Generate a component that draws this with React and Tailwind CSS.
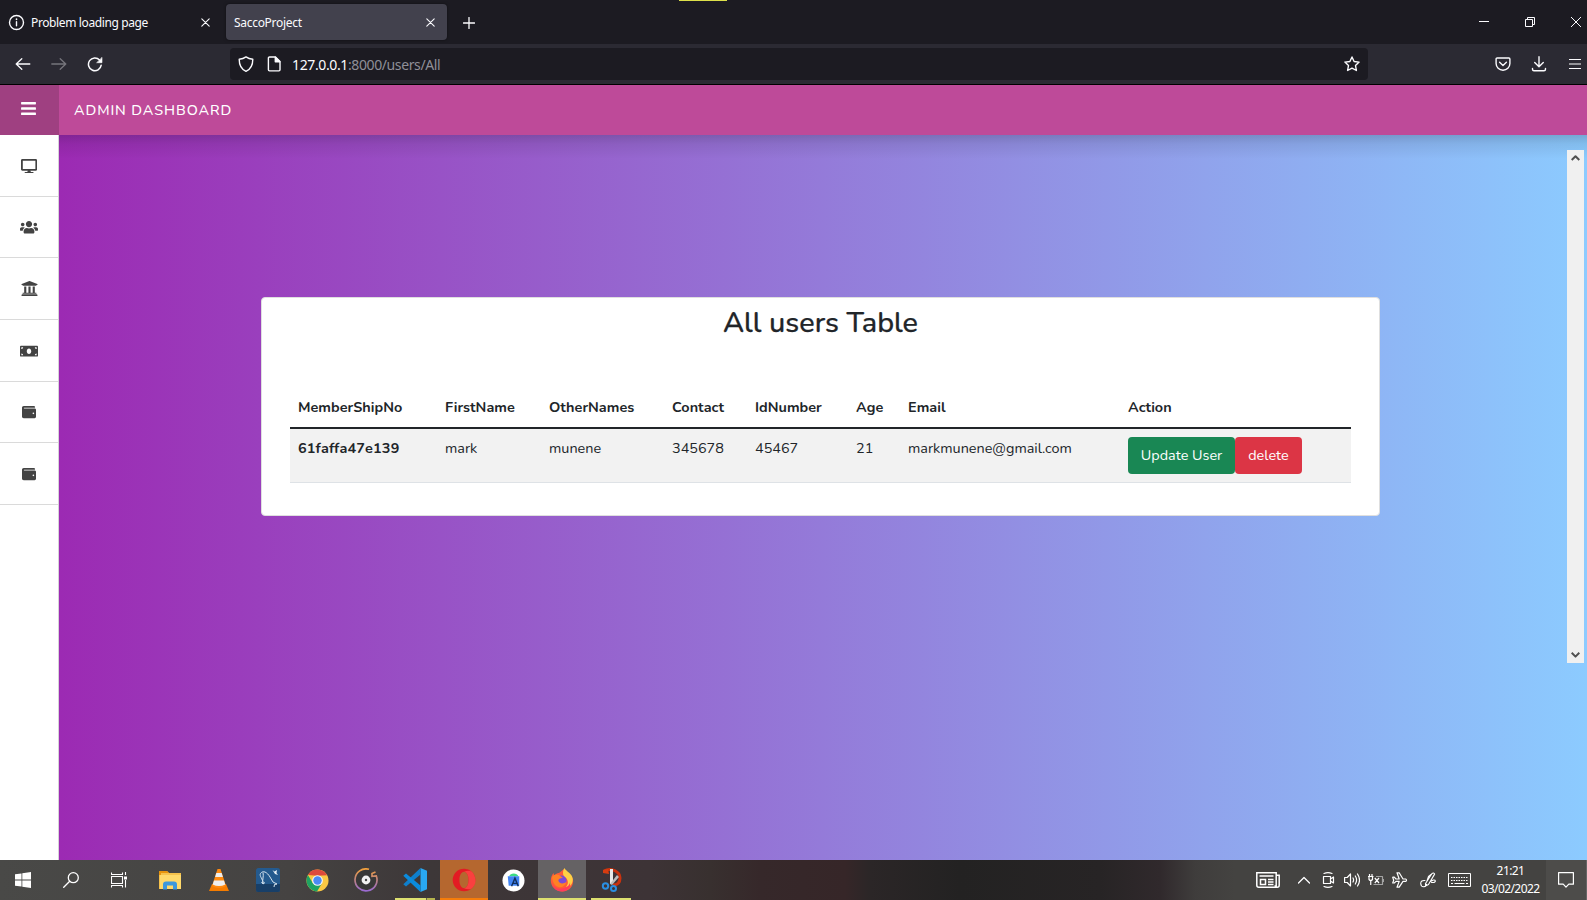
import React from "react";
import { FaBars, FaDesktop, FaUsers, FaUniversity, FaMoneyBill, FaWallet } from "react-icons/fa";

function Line({ size = 16, w = 1.3, className = "", children, box = 16, cap = "round" }) {
  return (
    <svg width={size} height={size} viewBox={`0 0 ${box} ${box}`} fill="none" stroke="currentColor"
      strokeWidth={w} strokeLinecap={cap} strokeLinejoin="round" className={`shrink-0 ${className}`}>
      {children}
    </svg>
  );
}

const Cross = ({ size = 9, w = 1.1 }) => (
  <Line size={size} box={9} w={w}><path d="M.8.8l7.4 7.4M8.2.8L.8 8.2" /></Line>
);

function TabBar() {
  return (
    <div className="flex h-11 items-center bg-[#1c1b22] text-[12px] text-[#fbfbfe]">
      <div className="flex w-[226px] items-center pl-2">
        <Line size={17} box={17} w={1.4}>
          <circle cx="8.5" cy="8.5" r="7" /><path d="M8.5 7.8v4" /><path d="M8.5 5v.4" strokeWidth="1.6" />
        </Line>
        <span className="ml-1.5 w-[170px] pt-[2px] tracking-[-0.38px]">Problem loading page</span>
        <Cross />
      </div>
      <div className="flex h-9 w-[221px] items-center rounded bg-[#42414d] pl-2 shadow-[0_0_3px_rgba(0,0,0,0.5)]">
        <span className="w-[192px] pt-[2px] tracking-[-0.3px]">SaccoProject</span>
        <Cross />
      </div>
      <Line size={12} box={12} w={1.3} className="ml-4 mt-px"><path d="M6 .5v11M.5 6h11" /></Line>
      <div className="ml-auto flex items-center pr-[6px]">
        <Line size={10} box={10} w={1} cap="butt"><path d="M0 4.5h10" /></Line>
        <Line size={10} box={10} w={1} cap="butt" className="ml-9"><path d="M.5 2.5h7v7h-7zM2.5 2.5v-2h7v7h-2" /></Line>
        <Line size={10} box={10} w={1} className="ml-9"><path d="M.3.3l9.4 9.4M9.7.3L.3 9.7" /></Line>
      </div>
    </div>
  );
}

function Toolbar() {
  return (
    <div className="flex h-[41px] items-center border-b border-black bg-[#2b2a33] text-[#fbfbfe]">
      <div className="flex w-[230px] items-center pl-[15px]">
        <Line w={1.3}><path d="M1.2 8h13.600M6.800 2.700L1.200 8l5.600 5.300" /></Line>
        <Line w={1.3} className="ml-5 text-[#76757c]"><path d="M.8 8h14M9.200 2.700L14.800 8l-5.600 5.300" /></Line>
        <Line w={1.5} className="ml-5"><path d="M14.200 9.200A6.400 6.400 0 1 1 12.600 4" /><path d="M15 1.700v5h-5z" fill="currentColor" strokeWidth=".6" /></Line>
      </div>
      <div className="flex h-8 w-[1138px] items-center rounded bg-[#1c1b22] pl-2 pr-2">
        <Line w={1.4}><path d="M8 .9c2.200 1.600 4.300 2.200 6.800 2.400 0 5.700-1.700 9.900-6.800 12-5.100-2.100-6.800-6.300-6.800-12C3.700 3.100 5.800 2.500 8 .9z" /></Line>
        <Line w={1.4} className="ml-3"><path d="M3.500 1h6l4.500 4.500v8.300a1.100 1.100 0 0 1-1.100 1.100H3.500a1.100 1.100 0 0 1-1.100-1.100V2.100A1.100 1.100 0 0 1 3.500 1z" /><path d="M9.300 1.300v4.500h4.500z" fill="currentColor" /></Line>
        <span className="ml-[10px] pt-px text-[14px] tracking-[-0.38px] text-[#8f8f98]"><span className="text-[#fbfbfe]">127.0.0.1</span>:8000/users/All</span>
        <Line w={1.4} className="ml-auto"><path d="M8 1l2.100 4.500 5 .6-3.600 3.400.9 5L8 12.100l-4.400 2.400.9-5L.9 6.100l5-.6z" /></Line>
      </div>
      <div className="ml-auto flex items-center pr-[6px]">
        <Line w={1.400}><path d="M2.100 2h11.800a1 1 0 0 1 1 1v4.600a6.900 6.600 0 0 1-13.800 0V3a1 1 0 0 1 1-1z" /><path d="M4.600 6.300L8 9.500l3.400-3.200" /></Line>
        <Line w={1.400} className="mb-px ml-5"><path d="M8 .8v9.800M3.700 6.500L8 10.700l4.300-4.200M1.500 12.500v.8A1.500 1.500 0 0 0 3 14.800h10a1.500 1.500 0 0 0 1.500-1.500v-.8" /></Line>
        <Line size={12} box={12} w={1.2} cap="butt" className="ml-[22px]"><path d="M0 1.500h12M0 6h12M0 10.500h12" /></Line>
      </div>
    </div>
  );
}

const sideItems = [
  { Icon: FaDesktop, cls: "h-[14.4px] w-[16.2px] mt-px", row: "h-[62px]" },
  { Icon: FaUsers, cls: "h-[14.4px] w-[18px]", row: "h-[61px]" },
  { Icon: FaUniversity, cls: "h-[17px] w-[17px] mb-px", row: "h-[62px]" },
  { Icon: FaMoneyBill, cls: "h-[14.4px] w-[18px] mt-px", row: "h-[62px]" },
  { Icon: FaWallet, cls: "h-[14px] w-[14px]", row: "h-[61px]" },
  { Icon: FaWallet, cls: "h-[14px] w-[14px]", row: "h-[62px]" },
];

function Sidebar() {
  return (
    <aside className="w-[59px] shrink-0 border-r border-[#d6d2d8] bg-white text-[#434343]">
      {sideItems.map(({ Icon, cls, row }, i) => (
        <div key={i} className={`flex items-center justify-center border-b border-[#dadada] ${row}`}>
          <Icon className={cls} />
        </div>
      ))}
    </aside>
  );
}

const columns = [
  ["MemberShipNo", "61faffa47e139", "w-[147px]"],
  ["FirstName", "mark", "w-[104px]"],
  ["OtherNames", "munene", "w-[123px]"],
  ["Contact", "345678", "w-[83px]"],
  ["IdNumber", "45467", "w-[101px]"],
  ["Age", "21", "w-[52px]"],
  ["Email", "markmunene@gmail.com", "w-[220px]"],
];

function UsersCard() {
  return (
    <section className="ml-[202px] mt-[162px] h-[219px] w-[1119px] rounded border border-[#dfdfdf] bg-white px-7 pt-[7px] text-[14.4px] text-[#212529]">
      <h2 className="text-center text-[28.8px] font-medium leading-[36px] tracking-[0.02px] [-webkit-text-stroke:0.25px_currentColor]">All users Table</h2>
      <table className="mt-[46px] w-[1061px] table-fixed border-collapse">
        <thead>
          <tr className="h-[41px] border-b-2 border-[#212529] text-left align-top">
            {columns.map(([h, , w]) => <th key={h} className={`px-2 pt-[9px] font-bold leading-[22px] tracking-[0.04px] ${w}`}>{h}</th>)}
            <th className="px-2 pt-[9px] font-bold leading-[22px]">Action</th>
          </tr>
        </thead>
        <tbody>
          <tr className="h-[54px] border-b border-[#dee2e6] bg-[#f2f2f2] align-top">
            {columns.map(([h, v], i) => (
              <td key={h} className={`px-2 pt-2 leading-[22px] ${i === 0 ? "font-bold tracking-[0.17px]" : ""}`}>{v}</td>
            ))}
            <td className="px-2 pt-2">
              <div className="flex text-white">
                <button className="h-[37px] w-[107px] rounded bg-[#198754]">Update User</button>
                <button className="h-[37px] w-[67px] rounded bg-[#dc3545]">delete</button>
              </div>
            </td>
          </tr>
        </tbody>
      </table>
    </section>
  );
}

function Scrollbar() {
  return (
    <div className="ml-auto mr-[3px] mt-[15px] flex h-[513px] w-[17px] flex-col items-center justify-between bg-[#f0f0f0] py-1 text-[#505050]">
      <Line size={9} box={9} w={2} cap="butt"><path d="M.7 6L4.500 2.200l3.800 3.800" /></Line>
      <Line size={9} box={9} w={2} cap="butt"><path d="M.7 2.800l3.800 3.800 3.800-3.800" /></Line>
    </div>
  );
}

const Art = ({ s = 24, children }) => <svg width={s} height={s} viewBox="0 0 24 24">{children}</svg>;

const Folder = () => (
  <Art><path d="M1 3h8l2 2h12v16H1z" fill="#f5c14c" /><path d="M1 3h8l2 2H3v2H1z" fill="#e8940c" /><path d="M2 7h21v14H2z" fill="#ffd96b" /><path d="M5 21.500v-5q0-3 3-3h8q3 0 3 3v5h-4v-4H9v4z" fill="#3d98dd" /></Art>
);
const Vlc = () => (
  <Art><path d="M5 16h14l3 7H2z" fill="#f57c00" /><path d="M10.500 1h3l5.500 17q-7 4-14 0z" fill="#ff8a10" /><path d="M9.300 5h5.400l1.200 4H8.100zM7 12.500h10l1.300 4q-6.300 3-12.600 0z" fill="#eee" /></Art>
);
const Mysql = () => (
  <Art><rect width="24" height="24" rx="2.500" fill="#245a8e" /><path d="M0 16h24v6q0 2-2 2H2q-2 0-2-2z" fill="#183f68" /><path d="M7 15C7 11 3 8 4.500 5.500 7 2 11 4 14 9l3 5 4 2-2.500.5-.5 2.500M7 4.500c1 4-1 7 0 11M5.500 14l1.500 2 2-1.500" stroke="#d5e3ee" strokeWidth="1" fill="none" /><path d="M16.500 2l2 1.500L21 2l-.5 3L22 7l-3-1z" fill="#e6eef4" /></Art>
);
const Chrome = () => (
  <Art s={23}><circle cx="12" cy="12" r="11.500" fill="#fbc843" /><path d="M2.040 6.250A11.500 11.500 0 0 1 22 6.500L12 7z" fill="#de4a3c" /><path d="M2.040 6.250A11.500 11.500 0 0 0 11.500 23.500L16.500 15 7 14.500z" fill="#1ea362" /><circle cx="12" cy="12" r="5.600" fill="#f7f7f7" /><circle cx="12" cy="12" r="4.400" fill="#4a8af4" /></Art>
);
const Groove = () => (
  <Art><defs><linearGradient id="gr" x2="0" y2="1"><stop stopColor="#f4a13c" /><stop offset=".55" stopColor="#b77f88" /><stop offset="1" stopColor="#9b6bd3" /></linearGradient></defs><circle cx="12" cy="12" r="10" fill="#383838" /><path d="M15 1.300A11 11 0 1 0 22.300 8L18 8.300V5.500l3.500-1.500" stroke="url(#gr)" strokeWidth="1.700" fill="none" /><circle cx="12" cy="12" r="4.400" fill="#f2f2f2" /><circle cx="12" cy="12" r="1.200" fill="#444" /></Art>
);
const Code = () => (
  <Art><path d="M17.500 0L24 2.800v18.400L17.500 24z" fill="#29a8f2" /><path d="M17.500 0v6.500L3 18.500.3 16.200z" fill="#0f7fcc" /><path d="M17.500 24v-6.500L3 5.500.3 7.800z" fill="#0b8bdd" /></Art>
);
const Opera = () => (
  <Art><path fillRule="evenodd" d="M12 .7a11.300 11.300 0 1 0 0 22.600A11.300 11.300 0 0 0 12 .7zm0 3.100c2.800 0 4.600 3.700 4.600 8.200s-1.800 8.200-4.600 8.200S7.400 16.500 7.400 12 9.200 3.800 12 3.800z" fill="#e31b23" /><path d="M12 .7a11.300 11.300 0 0 1 7.600 19.700c-2 1.300-5 1.300-7.600-.2 2.800 0 4.600-3.700 4.600-8.200S14.800 3.800 12 3.800c2.600-1.500 5.600-1.500 7.600-.2C17.600 1.700 15 .7 12 .7z" fill="#f9403f" /></Art>
);
const Studio = () => (
  <Art s={23}><circle cx="12" cy="12" r="11.500" fill="#fff" /><path d="M7.500 7.500a5 4 0 0 1 9.500 0z" fill="#3ddc84" /><path d="M6 7.500h12v10H7z" fill="#4285f4" /><path d="M10 18l3.500-8.500L17 18m-5.700-3h4.400" stroke="#12305e" strokeWidth="1.500" fill="none" /></Art>
);
const Firefox = () => (
  <Art><path d="M14 1c1 3 6 4 8.500 9 2.300 6-2 13.500-10 13.500C5 23.500.8 18 .8 12.500.8 9 2 7 3.500 5l.7 2.300C6 5.500 8 5 9 5z" fill="#ff5a38" /><path d="M14.500 0c2 4 7.500 5 8.300 11 .2 5-2.800 8-6.800 8 3-3 2-7 0-9-2-1-3-3-3-5 0-2 .5-3.500 1.500-5z" fill="#ffd045" /><circle cx="11.500" cy="12.500" r="5" fill="#7a4bd6" /><path d="M2 9c2-3 5-3 7-2l4 3c-3 0-5 1-4.500 3 1 3 5 3 8 1-1 4-5 6-8 5-4-1-6-5-6.500-10z" fill="#ff8124" /><path d="M2 15c2 5 7 7 12 5 4-1 6-4 6-6 1 6-3 9.500-8 9.500S3 20 2 15z" fill="#ff3c5d" /></Art>
);
const Snip = () => (
  <Art><path d="M5 3C13-1 21 4 21 10c0 5-3 7-7 7" fill="none" stroke="#c9320e" strokeWidth="3" /><path d="M4 2l5-1 1 5-6-1z" fill="#d63c10" /><path d="M11 1h3v15h-3z" fill="#e9e9e9" /><path d="M18 7l2 2-7 8-2-1z" fill="#bdbdbd" /><circle cx="6.500" cy="18" r="2.700" fill="none" stroke="#2a8ee0" strokeWidth="2" /><circle cx="14.500" cy="20.500" r="2.500" fill="none" stroke="#2a8ee0" strokeWidth="2" /></Art>
);

const apps = [
  { Icon: Folder }, { Icon: Vlc }, { Icon: Mysql }, { Icon: Chrome }, { Icon: Groove },
  { Icon: Code, bar: "w-10 bg-[linear-gradient(to_right,#dde070_31px,#6b6744_31px,#6b6744_32px,#b5b44d_32px)]" },
  { Icon: Opera, tile: "bg-[#b5672f]", bar: "w-12 bg-[#f57c0a]" },
  { Icon: Studio },
  { Icon: Firefox, tile: "bg-[#656264]", bar: "w-12 bg-[#dde070]" },
  { Icon: Snip, bar: "w-10 bg-[#dde070]" },
];

function Taskbar() {
  return (
    <footer className="flex h-10 items-stretch bg-[linear-gradient(to_right,#494947_0,#454342_290px,#3d3738_430px,#3d3336_650px,#38302f_710px,#36282a_760px,#362628_845px,#2b2627_870px,#232222_960px,#272425_1100px,#30292c_1160px,#3f3d3c_1195px,#444341_1235px,#444341_100%)] text-white">
      <div className="flex w-[46px] items-center justify-center">
        <svg width="16" height="16" viewBox="0 0 16 16" fill="currentColor"><path d="M0 2.300l6.500-.9v6.200H0zM7.300 1.300L16 0v7.600H7.300zM0 8.400h6.500v6.200L0 13.700zM7.300 8.400H16V16l-8.700-1.300z" /></svg>
      </div>
      <div className="ml-px flex w-12 items-center justify-center"><Line w={1.300}><circle cx="10.300" cy="5.700" r="5" /><path d="M6.700 9.300L.7 15.300" /></Line></div>
      <div className="mr-[3px] flex w-12 items-center justify-center">
        <Line w={1.100} cap="butt"><path d="M.5.500v2h11v-2M.5 15.500v-2h11v2M.5 4.500h11v7H.5zM14.500 0v3M14.500 8v7.500" /><path d="M13 4.500h3v3h-3z" fill="currentColor" stroke="none" /></Line>
      </div>
      <div className="flex gap-px">
        {apps.map(({ Icon, tile = "", bar }, i) => (
          <div key={i} className={`flex w-12 flex-col items-center ${tile}`}>
            <div className="flex h-[38px] items-center pt-[2px]"><Icon /></div>
            {bar && <div className={`h-[2px] ${bar}`} />}
          </div>
        ))}
      </div>
      <div className="ml-auto flex items-center">
        <div className="mr-1 flex w-10 justify-center">
          <svg width="24" height="16" viewBox="0 0 24 16" fill="none" stroke="currentColor" strokeWidth="1.500"><path d="M.8.8h19.400v14.400H2.800a2 2 0 0 1-2-2zM20.200 3.200h3v10a2 2 0 0 1-4 0M3.500 4h14M12 7.500h5.500M12 10h5.500M12 12.500h5.500M4.500 7.500h5v5h-5z" /></svg>
        </div>
        <div className="flex w-6 justify-center"><Line size={12} box={12} w={1.300}><path d="M.5 9L6 3.500 11.500 9" /></Line></div>
        <div className="flex w-6 justify-center"><Line w={1.200}><path d="M3.500 4.500h7v7h-7zM10.500 7l3-2v6l-3-2M4 1.500Q8-.2 12 1.500M4 14.500q4 1.700 8 0" /></Line></div>
        <div className="flex w-6 justify-center"><Line w={1.200}><path d="M.6 5.500h2.600L6.500 2v12l-3.300-3.500H.6zM9 6q1.200 2 0 4M11.300 4q2.600 4 0 8M13.500 2q4 6 0 12" /></Line></div>
        <div className="flex w-6 justify-center"><Line w={1.200} cap="butt"><path d="M8 4.500h6.500v8H5.500M15.500 7v3" stroke="#a3a3a3" /><path d="M0 4.500h5.500M1 4.500v3q1.750 2 3.500 0v-3M1.500 2v2.500M4 2v2.500M2.750 8.500V13M6.800 6l4.200 5M11 6l-4.200 5" /></Line></div>
        <div className="flex w-6 justify-center"><Line w={1.200}><path d="M.7 5.200h1.600L4 7h3.200L5 .8h2.200L11 7h2.700a1.300 1.300 0 0 1 0 2.400H11L7.200 15.200H5L7.200 9.400H4L2.300 11H.7l1-2.800z" /></Line></div>
        <div className="flex w-8 justify-center"><Line w={1.100}><path d="M5.500 11.500L12 1.500q1.700-1.200 2.600.6L8.500 12.500l-3 1.500zM5 8.500Q.8 8 .7 11.500q.3 3.300 2.800 3.300 2.500-.3 3-2.500M7 9l1.500-4.500L11 2.500M10.500 9.500l3-1.500q2-.3 1.800 1.500L14 10.500h-2.500" /></Line></div>
        <div className="flex w-[31px] justify-center">
          <svg width="23" height="14" viewBox="0 0 23 14" fill="none" stroke="currentColor" strokeWidth="1"><path d="M.5.5h22v13H.5z" /><path d="M3 4.500h17M3 7.500h17" strokeWidth="1" strokeDasharray="1.500 1" /><path d="M3 10.500h2M6.500 10.500h10M18 10.500h2" strokeWidth="1" /></svg>
        </div>
        <div className="flex w-[71px] flex-col items-center text-[12px] leading-[18px] tracking-[-0.58px]"><span>21:21</span><span>03/02/2022</span></div>
        <div className="flex h-10 w-[41px] items-center justify-center border-r border-[#666] bg-[#4d4c4a]"><Line w={1.200}><path d="M.6.600h14.800v11.600h-4.600l-2.800 3-2.800-3H.6z" /></Line></div>
      </div>
    </footer>
  );
}

export default function App() {
  return (
    <div className="relative flex h-[900px] w-[1587px] flex-col overflow-hidden font-['Segoe_UI','Noto_Sans',sans-serif]">
      <div className="absolute left-[679px] top-0 h-px w-12 bg-[#dde04a]" />
      <TabBar />
      <Toolbar />
      <div className="flex min-h-0 grow flex-col font-['Nunito','Lato',sans-serif]">
        <header className="z-10 flex h-[50px] shrink-0 bg-[#be4a99] text-white">
          <div className="flex w-[59px] items-center justify-center bg-[#9f4081] pb-[3px] pr-[2px]"><FaBars className="h-[17px] w-[15px]" /></div>
          <div className="flex items-center pl-[15px] pt-[2px] text-[14.4px] font-medium tracking-[0.92px]">ADMIN DASHBOARD</div>
        </header>
        <div className="flex grow">
          <Sidebar />
          <main className="flex grow items-start self-stretch bg-[linear-gradient(to_bottom,rgba(0,0,0,0.17),rgba(0,0,0,0.07)_9px,transparent_24px),linear-gradient(to_right,#9c2ab3,#8ccbff)]">
            <UsersCard />
            <Scrollbar />
          </main>
        </div>
      </div>
      <Taskbar />
    </div>
  );
}
